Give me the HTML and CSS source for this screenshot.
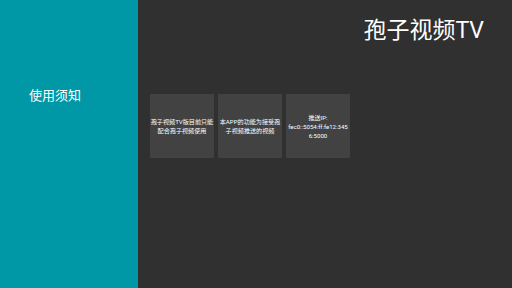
FILE: index.html
```html
<!DOCTYPE html>
<html>
  <head>
    <meta charset="UTF-8">
    <title>孢子视频TV</title>
    <link rel="stylesheet" href="styles.css">
  </head>
  <body>
    <aside class="side">
      <h2 class="side-title">使用须知</h2>
    </aside>
    <main class="main">
      <h1 class="brand">孢子视频TV</h1>
      <div class="cards">
        <div class="card">孢子视频TV版目前只能<br>配合孢子视频使用</div>
        <div class="card">本APP的功能为接受孢<br>子视频推送的视频</div>
        <div class="card">推送IP:<br>fec0::5054:ff:fe12:345<br>6:5000</div>
      </div>
    </main>
  </body>
</html>
```
FILE: styles.css
```css
html, body {
    margin: 0;
    height: 100%;
}
body {
    display: flex;
    font-family: Roboto, "Noto Sans CJK SC", sans-serif;
    background: #303030;
    color: #fff;
}
.side {
    width: 138px;
    background: #0097a7;
    padding-top: 86px;
    box-sizing: border-box;
}
.side-title {
    margin: 0 0 0 29px;
    font-size: 13px;
    font-weight: normal;
    line-height: 20px;
}
.main {
    flex: 1;
    padding: 0 28px 0 12px;
}
.brand {
    margin: 16px 0 0;
    text-align: right;
    font-size: 23px;
    font-weight: normal;
    line-height: 30px;
}
.cards {
    display: flex;
    gap: 4px;
    margin-top: 48px;
}
.card {
    width: 64px;
    height: 64px;
    background: #424242;
    display: flex;
    align-items: center;
    justify-content: center;
    text-align: center;
    font-size: 6.1px;
    line-height: 9px;
    white-space: nowrap;
    color: #fff;
}
```
